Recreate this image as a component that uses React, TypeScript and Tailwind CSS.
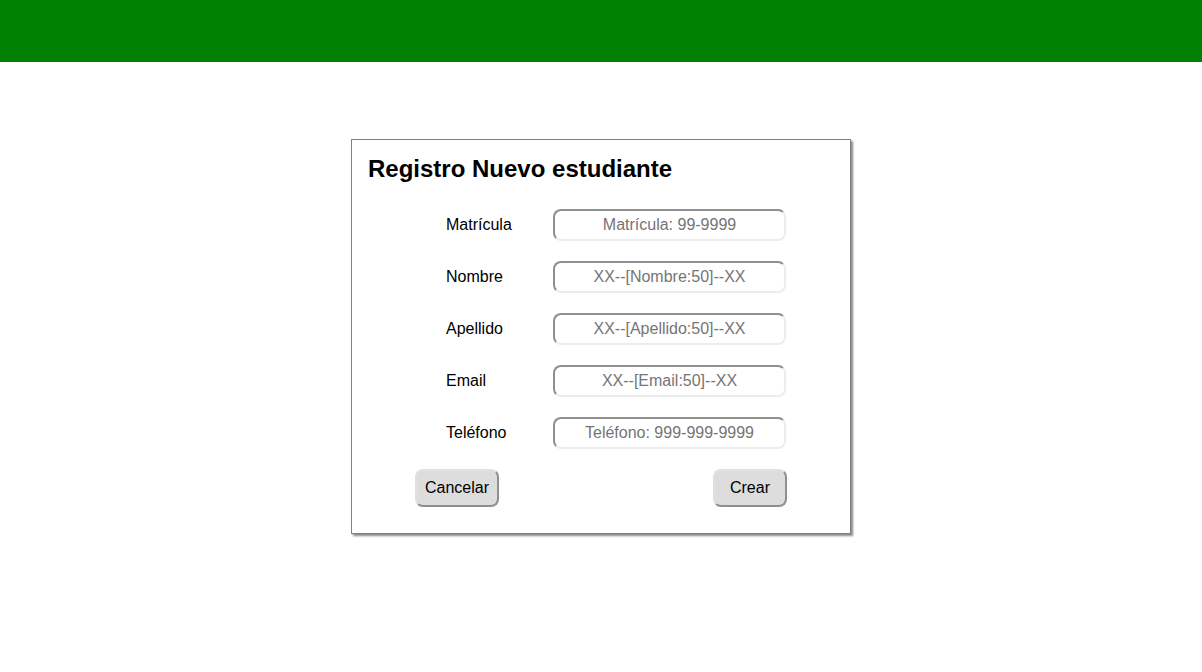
const fields = [
  { label: "Matrícula", placeholder: "Matrícula: 99-9999" },
  { label: "Nombre", placeholder: "XX--[Nombre:50]--XX" },
  { label: "Apellido", placeholder: "XX--[Apellido:50]--XX" },
  { label: "Email", placeholder: "XX--[Email:50]--XX" },
  { label: "Teléfono", placeholder: "Teléfono: 999-999-9999" },
];

export default function App() {
  return (
    <div className="min-h-screen bg-white font-['Liberation_Sans',Arial,sans-serif] text-black">
      <div className="h-[62px] bg-[#008000]" />

      <div className="mx-auto mt-[77px] w-[500px] border border-[#808080] bg-white px-4 pt-[15px] pb-[26px] shadow-[2px_2px_2px_#8a8a8a]">
        <h1 className="text-2xl font-bold leading-[28px]">Registro Nuevo estudiante</h1>

        <div className="mt-[26px] flex flex-col gap-5">
          {fields.map((f) => (
            <div key={f.label} className="ml-[78px] flex items-center">
              <label className="w-[107px] text-base leading-[18px]">{f.label}</label>
              <input
                placeholder={f.placeholder}
                className="h-8 w-[233px] rounded-lg border-2 border-t-[#8f8f8f] border-l-[#8f8f8f] border-r-[#ececec] border-b-[#ececec] bg-white text-center text-base outline-none placeholder:text-[#757575]"
              />
            </div>
          ))}
        </div>

        <div className="mt-5 ml-[47px] flex w-[372px] justify-between">
          <button className="h-[38px] w-[84px] rounded-lg border-2 border-t-[#e0e0e0] border-l-[#e0e0e0] border-r-[#8f8f8f] border-b-[#8f8f8f] bg-[#dddddd] text-base">
            Cancelar
          </button>
          <button className="h-[38px] w-[74px] rounded-lg border-2 border-t-[#e0e0e0] border-l-[#e0e0e0] border-r-[#8f8f8f] border-b-[#8f8f8f] bg-[#dddddd] text-base">
            Crear
          </button>
        </div>
      </div>
    </div>
  );
}
